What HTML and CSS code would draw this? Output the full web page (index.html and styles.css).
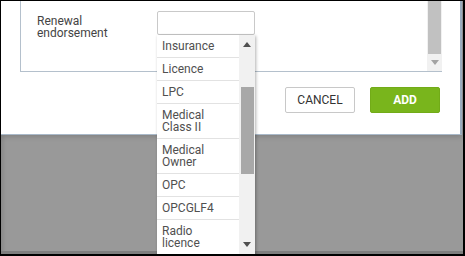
FILE: index.html
```html
<!DOCTYPE html>
<html lang="en">
<head>
  <meta charset="UTF-8" />
  <title>Renewal endorsement</title>
  <link rel="stylesheet" href="styles.css">
</head>
<body>
  <div class="screen">
    <div class="dialog">
      <div class="panel">
        <div class="panel-body">
          <div class="field">
            <label class="field-label">Renewal<br>endorsement</label>
            <div class="select-wrap">
              <div class="select-box"></div>

              <div class="dropdown">
                <ul class="options">
                  <li>Insurance</li>
                  <li>Licence</li>
                  <li>LPC</li>
                  <li>Medical<br>Class II</li>
                  <li>Medical<br>Owner</li>
                  <li>OPC</li>
                  <li>OPCGLF4</li>
                  <li>Radio<br>licence</li>
                </ul>
                <div class="dd-scroll">
                  <svg class="arrow arrow-up" width="8" height="5" viewBox="0 0 8 5"><polygon points="0,5 8,5 4,0" /></svg>
                  <div class="dd-thumb"></div>
                  <svg class="arrow arrow-down" width="8" height="5" viewBox="0 0 8 5"><polygon points="0,0 8,0 4,5" /></svg>
                </div>
              </div>
            </div>
          </div>
        </div>
        <div class="panel-scroll">
          <div class="panel-thumb"></div>
          <svg class="arrow" width="8" height="5" viewBox="0 0 8 5"><polygon points="0,0 8,0 4,5" /></svg>
        </div>
      </div>

      <div class="actions">
        <button class="btn btn-cancel">CANCEL</button>
        <button class="btn btn-add">ADD</button>
      </div>
    </div>
  </div>
</body>
</html>
```

FILE: styles.css
```css
:root {
  --backdrop: #999999;
  --line: #b4c0cc;
  --text: #444444;
  --green: #79b51c;
}

body {
  margin: 0;
  font-family: Roboto, "Liberation Sans", sans-serif;
  color: var(--text);
}

.screen {
  width: 465px;
  height: 256px;
  box-sizing: border-box;
  border: 1px solid #000;
  border-right-width: 2px;
  border-bottom-width: 2px;
  background-color: var(--backdrop);
  box-shadow: inset 0 -3px 0 #7e7e7e, inset 4px 0 4px -2px rgba(0, 0, 0, 0.12);
  overflow: hidden;
}

.dialog {
  width: 461px;
  height: 134px;
  box-sizing: border-box;
  background: #fff;
  border-right: 2px solid #9aabbd;
  border-bottom: 1px solid #a9b9c9;
  box-shadow: 0 2px 5px rgba(0, 0, 0, 0.15);
}

.panel {
  display: flex;
  margin-left: 19px;
  width: 422px;
  height: 71px;
  box-sizing: border-box;
  border-left: 1px solid var(--line);
  border-bottom: 1px solid var(--line);
}

.panel-body {
  flex: 1;
  padding: 10px 0 0 16px;
}

.field {
  display: flex;
}

.field-label {
  width: 120px;
  margin-top: 4px;
  font-size: 12px;
  line-height: 12px;
  color: var(--text);
}

.select-wrap {
  position: relative;
}

.select-box {
  width: 98px;
  height: 24px;
  box-sizing: border-box;
  border: 1px solid #c9c9c9;
  border-radius: 2px;
  background: #fff;
}

.panel-scroll {
  width: 15px;
  height: 70px;
  background: #f1f1f1;
  display: flex;
  flex-direction: column;
  align-items: center;
}

.panel-thumb {
  width: 13px;
  height: 53px;
  background: #c1c1c1;
}

.panel-scroll .arrow {
  margin-top: 6px;
  fill: #a3a3a3;
}

.actions {
  display: flex;
  justify-content: flex-end;
  gap: 15px;
  margin-top: 15px;
  padding-right: 20px;
}

.btn {
  width: 70px;
  height: 26px;
  border-radius: 2px;
  font-family: Roboto, "Liberation Sans", sans-serif;
  font-size: 12px;
  padding: 0;
  cursor: pointer;
}

.btn-cancel {
  background: #fff;
  border: 1px solid #c8c8c8;
  color: #333;
}

.btn-add {
  background: var(--green);
  border: 1px solid #72ab18;
  color: #fff;
  font-weight: bold;
}

/* open select list, lies over the dialog and backdrop */
.dropdown {
  position: absolute;
  top: 24px;
  left: 0;
  width: 98px;
  height: 220px;
  display: flex;
  background: #fff;
  box-shadow: 1px 1px 3px rgba(0, 0, 0, 0.3);
  z-index: 5;
}

.options {
  flex: 1;
  margin: 0;
  padding: 0;
  list-style: none;
  overflow: hidden;
}

.options li {
  padding: 5px 5px;
  font-size: 12px;
  line-height: 12px;
  color: #505050;
  border-bottom: 1px solid #e2e2e2;
}

.dd-scroll {
  position: relative;
  width: 16px;
  background: #f1f1f1;
}

.dd-thumb {
  position: absolute;
  top: 52px;
  left: 2px;
  width: 13px;
  height: 87px;
  background: #a8a8a8;
}

.dd-scroll .arrow {
  position: absolute;
  left: 4px;
  fill: #505050;
}

.arrow-up {
  top: 7px;
}

.arrow-down {
  top: 207px;
}
```
